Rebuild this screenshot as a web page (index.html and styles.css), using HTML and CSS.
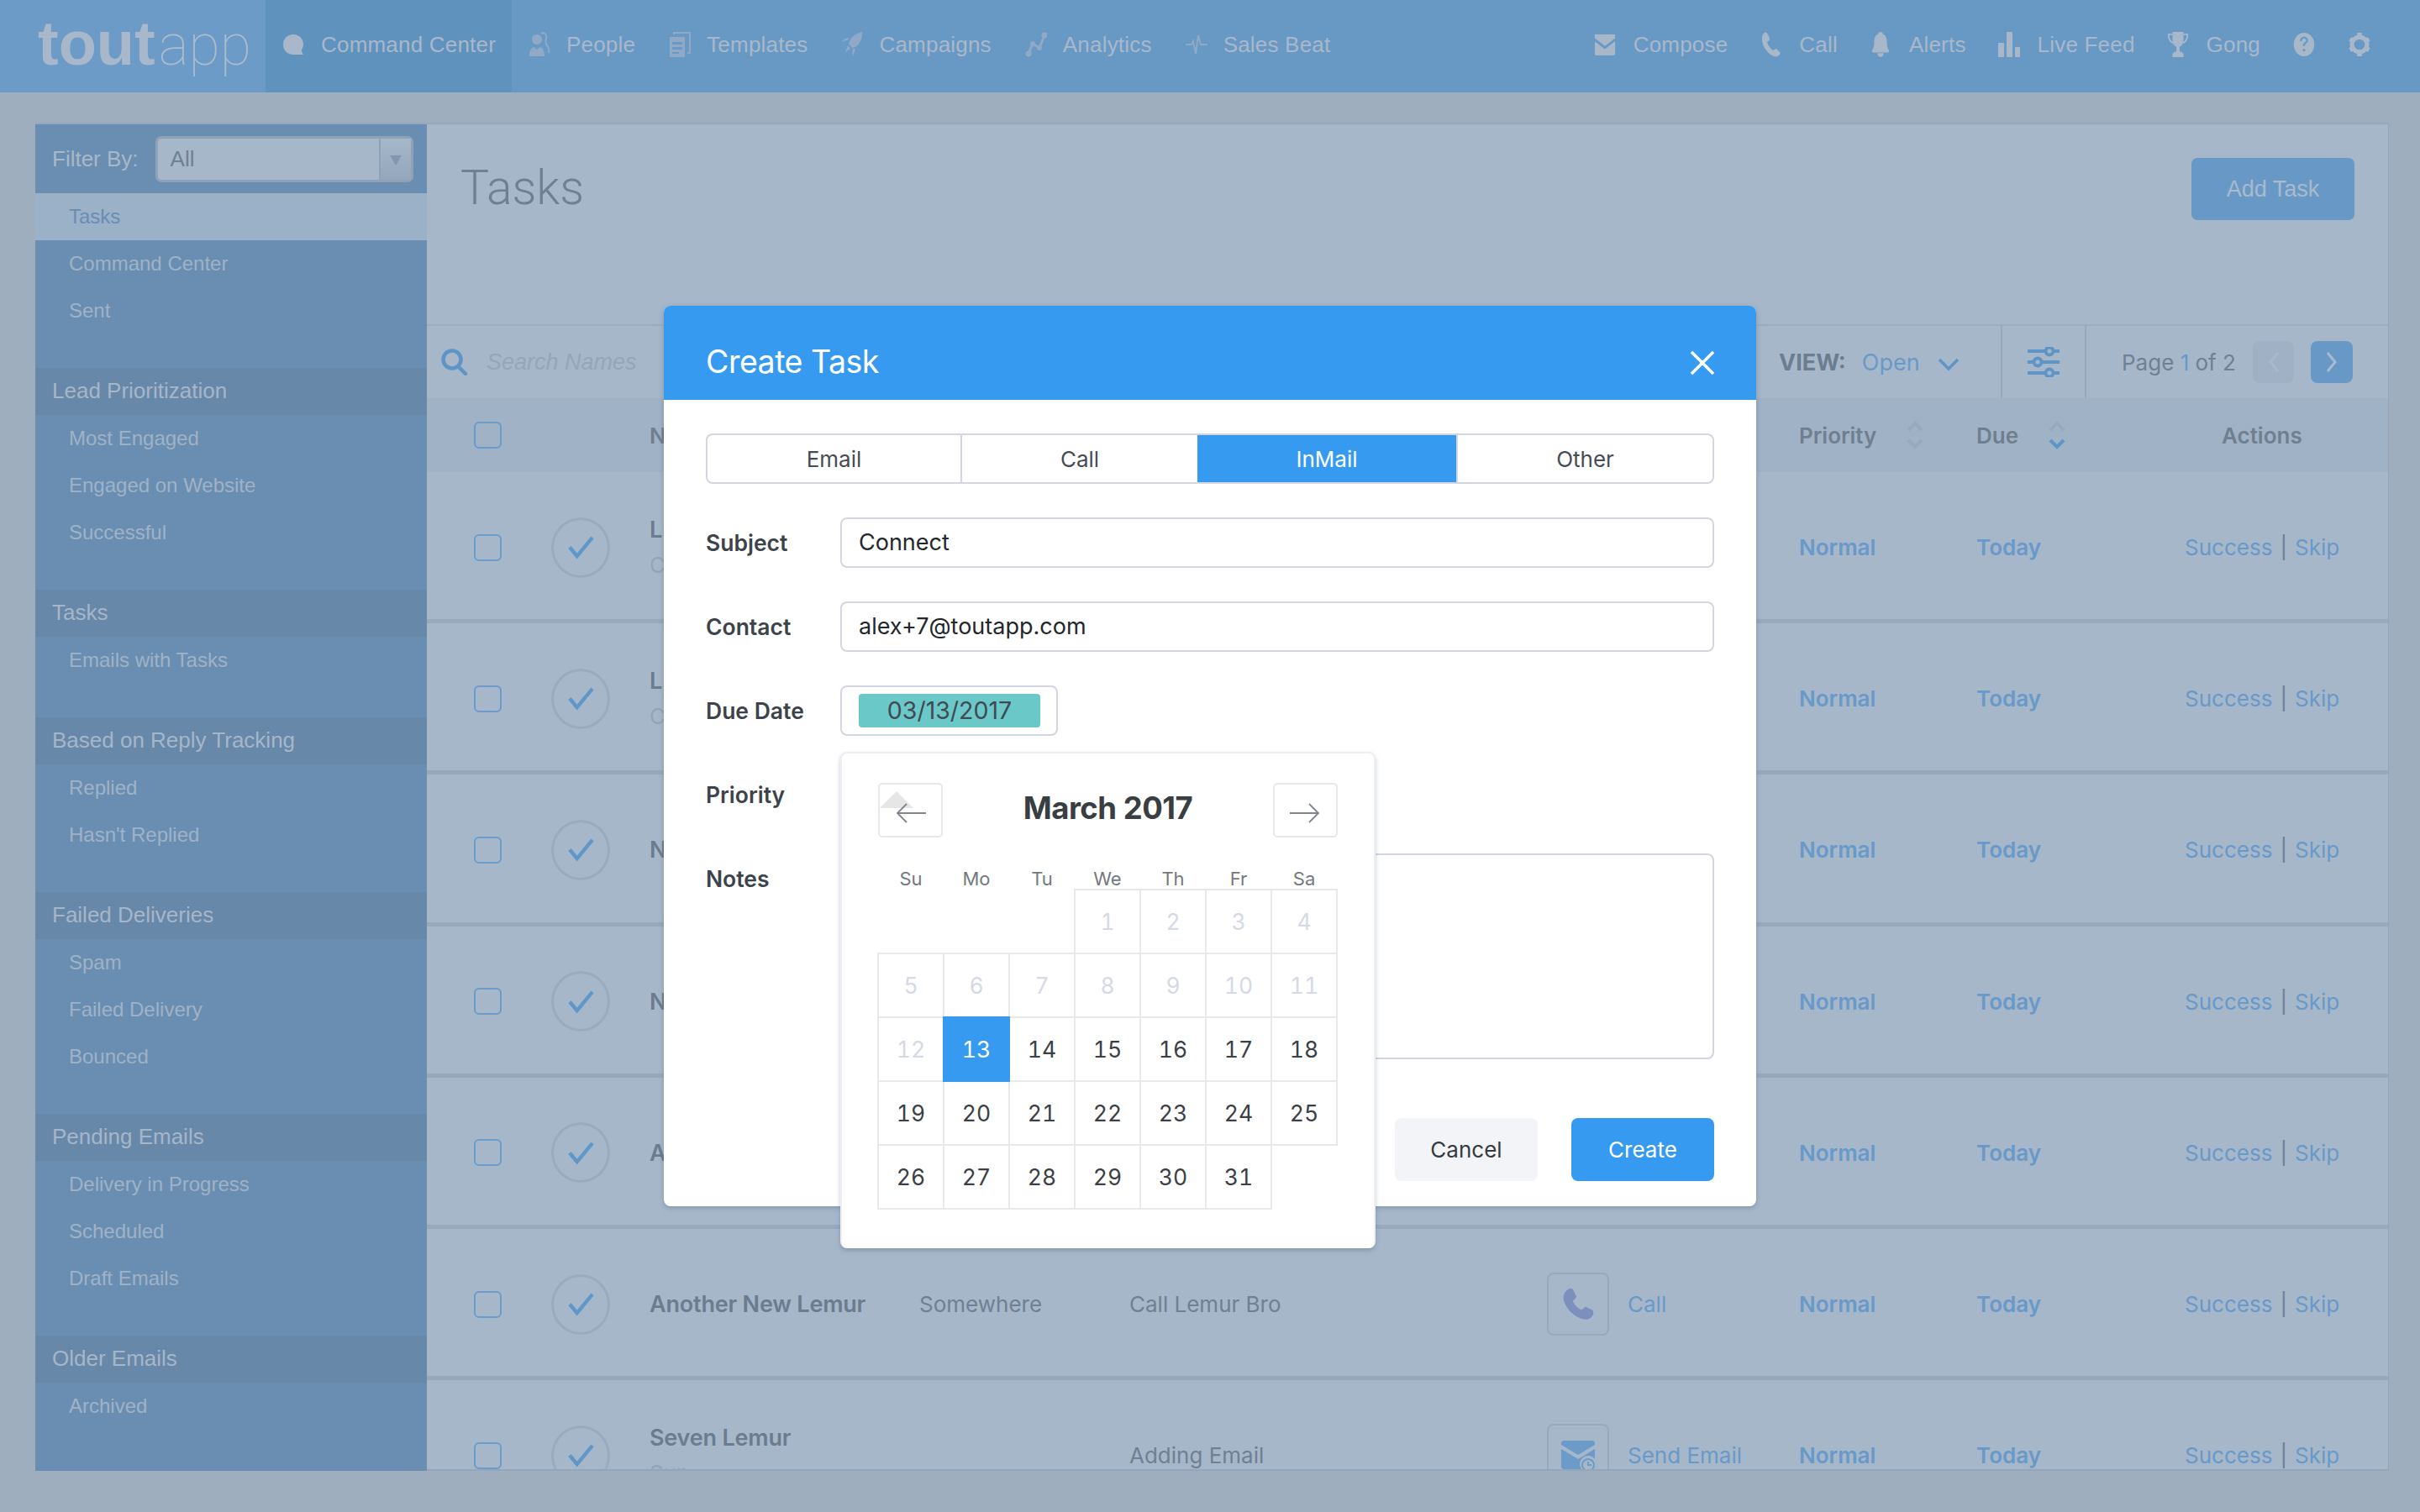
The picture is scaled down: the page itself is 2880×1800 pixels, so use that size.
FILE: index.html
```html
<!DOCTYPE html>
<html lang="en">
<head>
  <meta charset="UTF-8">
  <title>ToutApp - Tasks</title>
  <link rel="stylesheet" href="styles.css">
</head>
<body>
  <!-- Top navigation -->
  <header class="topbar">
    <div class="logo"><b>tout</b><span>app</span></div>
    <nav class="nav">
      <a class="nav-item active"><svg class="ico" viewBox="0 0 26 26"><path d="M13 1C6 1 1 6 1 13s5 12 12 12h12c-1.500-1.500-2-4-2-6 1.500-2 2-4 2-6 0-7-5-12-12-12z"/></svg>Command Center</a>
      <a class="nav-item"><svg class="ico dim" viewBox="0 0 26 30"><circle cx="10" cy="9" r="6"/><path d="M1 29c0-5 1-9 5-11l4 3 4-3c4 2 5 6 5 11z"/><path class="line" d="M15 2c4-2 7 1 6 6-1 4-1 6 1 8 2 2 3 5 2 9"/></svg>People</a>
      <a class="nav-item"><svg class="ico dim" viewBox="0 0 26 30"><path d="M1 6h18v24H1zM4 12v3h12v-3zM4 18v3h12v-3zM4 24v2h8v-2z" fill-rule="evenodd"/><path class="line" d="M6 3V1h14v0h5v24h-3"/></svg>Templates</a>
      <a class="nav-item"><svg class="ico dim" viewBox="0 0 26 30"><path d="M25 0c1 6-2 14-8 18l-4 1-4-5 2-5c3-5 9-8 14-9z"/><path d="M9 9l-8 3c2-3 5-5 8-5zM17 20l-3 9c-1-3-1-6 0-9zM8 16l3 4-6 4z"/></svg>Campaigns</a>
      <a class="nav-item"><svg class="ico dim" viewBox="0 0 26 30"><path class="line thick" d="M4 26l5-12 8 5 6-15"/><circle cx="4" cy="26" r="3.500"/><circle cx="9" cy="14" r="3"/><circle cx="17" cy="19" r="3"/><circle cx="23" cy="4" r="3.500"/></svg>Analytics</a>
      <a class="nav-item"><svg class="ico dim" viewBox="0 0 26 30"><path class="line" d="M0 15h7l2-4 3 15 3-22 3 11h8"/></svg>Sales Beat</a>
    </nav>
    <nav class="nav nav-right">
      <a class="nav-item"><svg class="ico wide" viewBox="0 0 28 30"><path d="M1 2h26v5L14 17 1 7zM1 11l13 10 13-10v17l-2 1H3l-2-1z"/></svg>Compose</a>
      <a class="nav-item"><svg class="ico" viewBox="0 0 24 30"><path d="M5 1c2-1 3 0 4 2l2 5c0 1 0 2-2 3l-1 1c1 4 4 8 7 10l2-1c1-1 2-1 3 0l3 3c1 1 1 2 0 3-2 2-4 3-7 2C8 26 1 15 2 7c0-3 1-5 3-6z"/></svg>Call</a>
      <a class="nav-item"><svg class="ico" viewBox="0 0 24 32"><path d="M12 0c2 0 3 1 3 3 4 1 5 5 5 10 0 5 1 8 3 11l-1 2H2l-1-2c2-3 3-6 3-11 0-5 1-9 5-10 0-2 1-3 3-3zM8 27h8c0 3-2 5-4 5s-4-2-4-5z"/></svg>Alerts</a>
      <a class="nav-item"><svg class="ico" viewBox="0 0 26 30"><rect x="0" y="13" width="7" height="17" rx="1"/><rect x="10" y="0" width="7" height="30" rx="1"/><rect x="20" y="18" width="6" height="12" rx="1"/></svg>Live Feed</a>
      <a class="nav-item"><svg class="ico" viewBox="0 0 26 32"><path d="M6 0h14v8c0 6-2 10-5 11v6h3v2h2v5H6v-5h2v-2h3v-6C8 18 6 14 6 8z"/><path class="line" d="M6 3H1c0 6 2 10 6 11M20 3h5c0 6-2 10-6 11"/></svg>Gong</a>
      <a class="nav-item icon-only"><svg class="ico" viewBox="0 0 26 32"><ellipse cx="13" cy="16" rx="13" ry="15"/><path class="hole" d="M9 12c0-3 2-5 4-5s4 2 4 4-3 3-4 5v2"/><circle class="dot" cx="13" cy="23" r="1.700"/></svg></a>
      <a class="nav-item icon-only"><svg class="ico" viewBox="0 0 26 32"><circle class="line gear" cx="13" cy="16" r="9.500"/><path class="line gear-teeth" d="M13 1v5M13 26v5M1 9l4 2.500M21 20.500l4 2.500M1 23l4-2.500M21 11.500L25 9"/></svg></a>
    </nav>
  </header>

  <div class="shell">
    <!-- Left filter list -->
    <aside class="sidebar">
      <div class="filter">
        <label>Filter By:</label>
        <div class="select"><span>All</span><i></i></div>
      </div>
      <ul class="side-group">
        <li class="active">Tasks</li>
        <li>Command Center</li>
        <li>Sent</li>
      </ul>
      <h4>Lead Prioritization</h4>
      <ul class="side-group">
        <li>Most Engaged</li>
        <li>Engaged on Website</li>
        <li>Successful</li>
      </ul>
      <h4>Tasks</h4>
      <ul class="side-group">
        <li>Emails with Tasks</li>
      </ul>
      <h4>Based on Reply Tracking</h4>
      <ul class="side-group">
        <li>Replied</li>
        <li>Hasn't Replied</li>
      </ul>
      <h4>Failed Deliveries</h4>
      <ul class="side-group">
        <li>Spam</li>
        <li>Failed Delivery</li>
        <li>Bounced</li>
      </ul>
      <h4>Pending Emails</h4>
      <ul class="side-group">
        <li>Delivery in Progress</li>
        <li>Scheduled</li>
        <li>Draft Emails</li>
      </ul>
      <h4>Older Emails</h4>
      <ul class="side-group">
        <li>Archived</li>
      </ul>
    </aside>

    <!-- Task table -->
    <main class="panel">
      <div class="panel-head">
        <h1>Tasks</h1>
        <button class="add-task">Add Task</button>
      </div>

      <div class="toolbar">
        <svg class="search-ico" viewBox="0 0 32 32"><circle cx="13" cy="13" r="10.500"/><path d="M21 22l8 8"/></svg>
        <span class="search-text">Search Names</span>
        <div class="view">
          <b>VIEW:</b><span>Open</span>
          <svg class="chev" viewBox="0 0 26 16"><path d="M2 2l11 11L24 2"/></svg>
        </div>
        <div class="tune">
          <svg viewBox="0 0 38 36"><path d="M1 5h36M1 18h36M1 31h36"/><circle cx="26" cy="5" r="4.500"/><circle cx="12" cy="18" r="4.500"/><circle cx="26" cy="31" r="4.500"/></svg>
        </div>
        <div class="pager">
          <span>Page <em>1</em> of 2</span>
          <button class="page-btn off"><svg viewBox="0 0 14 26"><path d="M12 2L3 13l9 11"/></svg></button>
          <button class="page-btn"><svg viewBox="0 0 14 26"><path d="M2 2l9 11-9 11"/></svg></button>
        </div>
      </div>

      <div class="task-row table-head">
        <span class="checkbox"></span>
        <span></span>
        <span>N</span>
        <span></span>
        <span></span>
        <span></span>
        <span class="sort">Priority
          <svg viewBox="0 0 20 34"><path d="M2 11l8-8 8 8M2 23l8 8 8-8"/></svg>
        </span>
        <span class="sort">Due
          <svg viewBox="0 0 20 34"><path d="M2 11l8-8 8 8"/><path class="on" d="M2 23l8 8 8-8"/></svg>
        </span>
        <span class="actions-head">Actions</span>
      </div>

      <!-- the middle cells of these rows sit behind the dialog -->
      <div class="task-row">
        <span class="checkbox"></span>
        <span class="done"><svg viewBox="0 0 34 30"><path d="M3 15l9 11L31 3"/></svg></span>
        <div class="who"><b>L</b><small>C</small></div>
        <span></span><span></span><span></span>
        <span class="link strong">Normal</span>
        <span class="link strong">Today</span>
        <span class="acts"><a>Success</a><i>|</i><a>Skip</a></span>
      </div>
      <div class="task-row">
        <span class="checkbox"></span>
        <span class="done"><svg viewBox="0 0 34 30"><path d="M3 15l9 11L31 3"/></svg></span>
        <div class="who"><b>L</b><small>C</small></div>
        <span></span><span></span><span></span>
        <span class="link strong">Normal</span>
        <span class="link strong">Today</span>
        <span class="acts"><a>Success</a><i>|</i><a>Skip</a></span>
      </div>
      <div class="task-row">
        <span class="checkbox"></span>
        <span class="done"><svg viewBox="0 0 34 30"><path d="M3 15l9 11L31 3"/></svg></span>
        <div class="who"><b>N</b></div>
        <span></span><span></span><span></span>
        <span class="link strong">Normal</span>
        <span class="link strong">Today</span>
        <span class="acts"><a>Success</a><i>|</i><a>Skip</a></span>
      </div>
      <div class="task-row">
        <span class="checkbox"></span>
        <span class="done"><svg viewBox="0 0 34 30"><path d="M3 15l9 11L31 3"/></svg></span>
        <div class="who"><b>N</b></div>
        <span></span><span></span><span></span>
        <span class="link strong">Normal</span>
        <span class="link strong">Today</span>
        <span class="acts"><a>Success</a><i>|</i><a>Skip</a></span>
      </div>
      <div class="task-row">
        <span class="checkbox"></span>
        <span class="done"><svg viewBox="0 0 34 30"><path d="M3 15l9 11L31 3"/></svg></span>
        <div class="who"><b>A</b></div>
        <span></span><span></span><span></span>
        <span class="link strong">Normal</span>
        <span class="link strong">Today</span>
        <span class="acts"><a>Success</a><i>|</i><a>Skip</a></span>
      </div>
      <div class="task-row">
        <span class="checkbox"></span>
        <span class="done"><svg viewBox="0 0 34 30"><path d="M3 15l9 11L31 3"/></svg></span>
        <div class="who"><b>Another New Lemur</b></div>
        <span class="place">Somewhere</span>
        <span class="title">Call Lemur Bro</span>
        <div class="kind">
          <span class="kind-box"><svg class="phone" viewBox="0 0 24 24"><path d="M6.600 1.500l2 .5 2.400 5-1 1.500-1.400 1.200c1 2.500 3.200 4.800 5.600 5.800l1.400-1.200 1.400-.8 4.700 2.300.3 2.200c-.8 2.500-3 4-5.500 3.700C9.600 20.600 3.400 14 2.500 8 2.300 5.300 4 2.800 6.600 1.500z"/></svg></span>
          Call
        </div>
        <span class="link strong">Normal</span>
        <span class="link strong">Today</span>
        <span class="acts"><a>Success</a><i>|</i><a>Skip</a></span>
      </div>
      <div class="task-row">
        <span class="checkbox"></span>
        <span class="done"><svg viewBox="0 0 34 30"><path d="M3 15l9 11L31 3"/></svg></span>
        <div class="who"><b>Seven Lemur</b><small>Sun</small></div>
        <span class="place"></span>
        <span class="title">Adding Email</span>
        <div class="kind">
          <span class="kind-box"><svg class="mail" viewBox="0 0 40 36"><path class="env" d="M0 2l2-2h36l2 2v3L20 17 0 5zM0 10l20 12 20-12v12a10 10 0 0 0-16 12H2l-2-2z"/><circle class="clock" cx="32" cy="29" r="7"/><path class="hands" d="M32 25v4h4"/></svg></span>
          Send Email
        </div>
        <span class="link strong">Normal</span>
        <span class="link strong">Today</span>
        <span class="acts"><a>Success</a><i>|</i><a>Skip</a></span>
      </div>
    </main>
  </div>

  <!-- Create Task dialog -->
  <section class="modal">
    <div class="modal-head">
      <h2>Create Task</h2>
      <button class="close"><svg viewBox="0 0 30 30"><path d="M2 2l26 26M28 2L2 28"/></svg></button>
    </div>
    <div class="modal-body">
      <div class="tabs">
        <span>Email</span>
        <span>Call</span>
        <span class="on">InMail</span>
        <span>Other</span>
      </div>
      <div class="field">
        <label>Subject</label>
        <div class="input">Connect</div>
      </div>
      <div class="field">
        <label>Contact</label>
        <div class="input">alex+7@toutapp.com</div>
      </div>
      <div class="field">
        <label>Due Date</label>
        <div class="date-wrap">
          <div class="input date-input"><span class="date-chip">03/13/2017</span></div>

          <!-- Date picker popup -->
          <div class="calendar">
            <div class="cal-head">
              <button class="cal-nav prev"><svg viewBox="0 0 36 24"><path d="M36 12H2M13 1L2 12l11 11"/></svg></button>
              <strong>March 2017</strong>
              <button class="cal-nav"><svg viewBox="0 0 36 24"><path d="M0 12h34M23 1l11 11-11 11"/></svg></button>
            </div>
            <div class="cal-days">
              <span>Su</span><span>Mo</span><span>Tu</span><span>We</span><span>Th</span><span>Fr</span><span>Sa</span>
            </div>
            <div class="cal-grid">
              <i></i><i></i><i></i>
              <a class="off">1</a><a class="off">2</a><a class="off">3</a><a class="off">4</a>
              <a class="off">5</a><a class="off">6</a><a class="off">7</a><a class="off">8</a><a class="off">9</a><a class="off">10</a><a class="off">11</a>
              <a class="off">12</a><a class="today">13</a><a>14</a><a>15</a><a>16</a><a>17</a><a>18</a>
              <a>19</a><a>20</a><a>21</a><a>22</a><a>23</a><a>24</a><a>25</a>
              <a>26</a><a>27</a><a>28</a><a>29</a><a>30</a><a>31</a>
            </div>
          </div>
        </div>
      </div>
      <div class="field">
        <label>Priority</label>
        <div class="input priority-input"></div>
      </div>
      <div class="field">
        <label>Notes</label>
        <div class="input notes"></div>
      </div>
      <div class="modal-foot">
        <button class="btn">Cancel</button>
        <button class="btn primary">Create</button>
      </div>
    </div>
  </section>
</body>
</html>
```

FILE: styles.css
```css
* {
  box-sizing: border-box;
}
html, body {
  margin: 0;
  height: 1800px;
  overflow: hidden;
}
body {
  position: relative;
  background: #9eaebf;
  font-family: "Liberation Sans", Arial, sans-serif;
  color: #6f8093;
}
a, button {
  font: inherit;
}
ul, h1, h2, h4 {
  margin: 0;
  padding: 0;
  list-style: none;
}

/* top bar */
.topbar {
  height: 110px;
  background: #6899c5;
  display: flex;
  color: #a8b8ca;
}
.logo {
  width: 316px;
  padding-left: 45px;
  display: flex;
  align-items: baseline;
  background: #6b9bc6;
  line-height: 104px;
}
.logo b {
  font-size: 74px;
}
.logo span {
  font-family: Roboto, sans-serif;
  font-weight: 100;
  font-size: 68px;
  margin-left: 4px;
  color: #adbccd;
}
.nav {
  display: flex;
}
.nav-right {
  margin-left: auto;
  padding-right: 39px;
}
.nav-item {
  display: flex;
  align-items: center;
  gap: 19px;
  padding: 0 20px 4px;
  font-size: 26px;
  letter-spacing: .2px;
  white-space: nowrap;
}
.nav-item.active {
  background: #6092be;
  gap: 20px;
  padding-right: 19px;
}
.nav-right .nav-item {
  padding: 0 19px 4px;
  gap: 21px;
}
.nav-right .icon-only {
  padding: 0 20px 4px;
}
.ico {
  width: 26px;
  height: 30px;
  fill: #a8b8ca;
  flex: none;
}
.ico.dim {
  fill: #8fa9c6;
}
.ico .line {
  fill: none;
  stroke: #a8b8ca;
  stroke-width: 2;
}
.ico.dim .line {
  stroke: #8fa9c6;
}
.ico .line.thick {
  stroke-width: 3;
}
.ico .hole {
  fill: none;
  stroke: #6899c5;
  stroke-width: 2.500;
}
.ico .dot {
  fill: #6899c5;
}
.ico .gear {
  stroke-width: 5.500;
}
.ico .gear-teeth {
  stroke-width: 6;
}

/* page shell */
.shell {
  margin: 36px 37px 0 42px;
  height: 1605px;
  display: flex;
  border-top: 2px solid #97a8bb;
}
.sidebar {
  width: 466px;
  flex: none;
  background: #6a8eb1;
  color: #9fb2c8;
  font-size: 24px;
  overflow: hidden;
}
.filter {
  height: 82px;
  display: flex;
  align-items: center;
  padding-left: 20px;
  gap: 20px;
  color: #a8b8ca;
  font-size: 26px;
}
.select {
  width: 307px;
  height: 55px;
  background: #a6b7ca;
  border: 3px solid #8ea1b7;
  border-radius: 7px;
  display: flex;
  align-items: center;
  justify-content: space-between;
  padding-left: 15px;
  color: #6f8093;
}
.select i {
  width: 38px;
  height: 100%;
  border-left: 2px solid #8ea1b7;
  background: linear-gradient(#a6b7ca, #93a6bb);
  position: relative;
}
.select i::after {
  content: "";
  position: absolute;
  left: 11px;
  top: 20px;
  border: 7px solid transparent;
  border-top: 12px solid #8296ad;
  border-bottom: 0;
}
.side-group {
  padding-bottom: 40px;
}
.side-group li {
  height: 56px;
  line-height: 56px;
  padding-left: 40px;
}
.side-group li.active {
  background: #9bb1c8;
  color: #688cb2;
}
.sidebar h4 {
  height: 56px;
  line-height: 54px;
  padding-left: 20px;
  background: #6788a9;
  font-weight: normal;
  font-size: 26px;
  color: #a6b6c9;
}

/* main panel */
.panel {
  flex: 1;
  background: #a6b7ca;
  border-right: 1px solid #94a6ba;
  border-bottom: 2px solid #94a6ba;
  overflow: hidden;
  font-family: Inter, "Liberation Sans", sans-serif;
}
.panel-head {
  height: 238px;
  padding: 40px 40px 0;
  display: flex;
  justify-content: space-between;
  align-items: flex-start;
}
.panel-head h1 {
  font-family: Roboto, sans-serif;
  font-weight: 300;
  font-size: 57px;
  line-height: 68px;
  padding-top: 2px;
  color: #6f8094;
}
.add-task {
  width: 194px;
  height: 74px;
  background: #6899c6;
  border: 0;
  border-radius: 7px;
  color: #a8bacc;
  font-family: "Liberation Sans", sans-serif;
  font-size: 27px;
}
.toolbar {
  height: 88px;
  border-top: 2px solid #9cadc1;
  display: flex;
  align-items: center;
  padding-left: 17px;
}
.search-ico {
  width: 32px;
  height: 32px;
  fill: none;
  stroke: #5f94c6;
  stroke-width: 4.500;
  stroke-linecap: round;
}
.search-text {
  margin-left: 22px;
  font-family: "Liberation Sans", sans-serif;
  font-style: italic;
  font-size: 27px;
  color: #93a6ba;
}
.view {
  margin-left: auto;
  width: 264px;
  display: flex;
  align-items: center;
  font-size: 27px;
  height: 100%;
}
.view b {
  font-weight: 700;
  color: #6c7d90;
  margin-right: 19px;
}
.view span {
  color: #6899c9;
  margin-right: 21px;
}
.chev {
  width: 26px;
  height: 16px;
  fill: none;
  stroke: #5f94c6;
  stroke-width: 3.500;
  margin-top: 6px;
}
.tune {
  width: 102px;
  height: 100%;
  flex: none;
  border-left: 2px solid #97a9bd;
  border-right: 2px solid #97a9bd;
  display: flex;
  align-items: center;
  justify-content: center;
}
.tune svg {
  width: 38px;
  height: 36px;
  fill: #a6b7ca;
  stroke: #5f94c6;
  stroke-width: 4;
  stroke-linecap: round;
}
.pager {
  width: 359px;
  padding: 0 42px;
  display: flex;
  align-items: center;
  font-size: 26px;
  color: #6f8093;
  white-space: nowrap;
}
.pager span {
  margin-right: auto;
}
.pager em {
  font-style: normal;
  color: #6899c9;
}
.page-btn {
  width: 50px;
  height: 50px;
  margin-left: 20px;
  padding: 0;
  border: 0;
  border-radius: 8px;
  background: #6899c6;
  display: flex;
  align-items: center;
  justify-content: center;
}
.page-btn svg {
  width: 14px;
  height: 26px;
  fill: none;
  stroke: #a8bacc;
  stroke-width: 3;
}
.page-btn.off {
  background: #a0b1c5;
}
.page-btn.off svg {
  stroke: #a8b9cb;
}

/* table rows */
.task-row {
  height: 180.200px;
  padding: 4px 0 0 56px;
  border-bottom: 5px solid #97a9bc;
  display: grid;
  grid-template-columns: 92px 117px 321px 250px 497px 300px 211px 248px 1fr;
  align-items: center;
  font-size: 26px;
}
.task-row:last-child {
  border-bottom-color: transparent;
}
.table-head {
  height: 88px;
  padding-top: 0;
  border-bottom: 0;
  background: #a0b2c5;
  font-weight: 600;
  color: #6f7f90;
}
.checkbox {
  width: 33px;
  height: 32px;
  border: 2px solid #6b9bcb;
  border-radius: 6px;
}
.done {
  width: 70px;
  height: 72px;
  border: 3px solid #9aabbf;
  border-radius: 50%;
  display: flex;
  align-items: center;
  justify-content: center;
}
.done svg {
  width: 33px;
  height: 29px;
  fill: none;
  stroke: #6097c9;
  stroke-width: 4.500;
}
.who {
  display: flex;
  flex-direction: column;
  gap: 11px;
}
.who b {
  font-weight: 600;
  line-height: 31px;
  color: #6b7c8f;
  font-size: 27px;
  white-space: nowrap;
  letter-spacing: -.2px;
}
.who small {
  font-size: 26px;
  line-height: 31px;
  color: #93a5b9;
}
.place, .title {
  color: #6f8093;
}
.kind {
  display: flex;
  align-items: center;
  gap: 22px;
  color: #6899c9;
}
.kind-box {
  width: 74px;
  height: 75px;
  border: 2px solid #97a9bd;
  border-radius: 8px;
  display: flex;
  align-items: center;
  justify-content: center;
  flex: none;
}
.phone {
  width: 44px;
  height: 44px;
  fill: #7d8fbc;
}
.mail {
  width: 40px;
  height: 36px;
}
.mail .env {
  fill: #6b9bc9;
}
.mail .clock {
  fill: #a6b7ca;
  stroke: #6b9bc9;
  stroke-width: 2;
}
.mail .hands {
  fill: none;
  stroke: #6b9bc9;
  stroke-width: 2;
}
.link {
  color: #6899c9;
}
.link.strong {
  font-weight: 600;
}
.acts {
  display: flex;
  align-items: center;
  color: #6899c9;
  white-space: nowrap;
}
.acts i {
  font-style: normal;
  color: #6f8093;
  margin: 0 9px;
}
.sort {
  display: flex;
  align-items: center;
  gap: 36px;
}
.sort svg {
  width: 20px;
  height: 34px;
  fill: none;
  stroke: #97a9bd;
  stroke-width: 4;
}
.sort svg .on {
  stroke: #5f94c6;
}
.actions-head {
  padding-left: 44px;
}

/* dialog */
.modal {
  position: absolute;
  left: 790px;
  top: 364px;
  width: 1300px;
  height: 1072px;
  background: #fff;
  border-radius: 8px;
  font-family: Inter, "Liberation Sans", sans-serif;
  box-shadow: 0 2px 6px rgba(80, 100, 125, .4);
}
.modal-head {
  height: 112px;
  background: #369bf0;
  border-radius: 8px 8px 0 0;
  padding: 0 49px 0 50px;
  display: flex;
  align-items: center;
  justify-content: space-between;
}
.modal-head h2 {
  font-weight: 400;
  font-size: 37.500px;
  color: #fff;
  letter-spacing: -.5px;
  padding-top: 20px;
}
.close {
  width: 30px;
  height: 30px;
  padding: 0;
  border: 0;
  background: none;
  margin-top: 24px;
}
.close svg {
  display: block;
  fill: none;
  stroke: #fff;
  stroke-width: 3.500;
}
.modal-body {
  padding: 40px 50px 30px;
  display: flex;
  flex-direction: column;
  gap: 40px;
}
.tabs {
  height: 60px;
  display: grid;
  grid-template-columns: 301px 282px 308px 1fr;
  border: 2px solid #d3d6e2;
  border-radius: 8px;
  overflow: hidden;
  font-size: 26px;
  color: #454c55;
}
.tabs span {
  display: flex;
  align-items: center;
  justify-content: center;
  border-left: 2px solid #d3d6e2;
}
.tabs span:first-child {
  border-left: 0;
}
.tabs .on {
  background: #369bf0;
  color: #fff;
  border-left: 0;
}
.field {
  display: grid;
  grid-template-columns: 160px 1fr;
}
.field label {
  height: 60px;
  line-height: 60px;
  font-weight: 600;
  font-size: 26.500px;
  color: #3c434a;
}
.input {
  height: 60px;
  border: 2px solid #d3d6e2;
  border-radius: 8px;
  padding-left: 20px;
  font-size: 27px;
  line-height: 56px;
  color: #23272b;
}
.date-wrap {
  position: relative;
}
.date-input {
  width: 259px;
  display: flex;
  align-items: center;
}
.date-chip {
  width: 216px;
  height: 40px;
  background: #6bc8c8;
  border-radius: 4px;
  text-align: center;
  line-height: 40px;
  font-size: 28.500px;
  color: #3f4a52;
}
.priority-input {
  width: 400px;
}
.notes {
  height: 245px;
}
.modal-foot {
  margin-top: 30px;
  display: flex;
  justify-content: flex-end;
  gap: 40px;
}
.btn {
  width: 170px;
  height: 75px;
  border: 0;
  border-radius: 8px;
  background: #f3f4f7;
  color: #343a40;
  font-size: 26px;
}
.btn.primary {
  background: #369bf0;
  color: #fff;
}

/* date picker */
.calendar {
  position: absolute;
  left: 0;
  top: 79px;
  width: 637px;
  height: 591px;
  z-index: 2;
  background: #fff;
  border: 2px solid #eeeff2;
  border-bottom: 0;
  border-radius: 8px;
  padding: 35px 43px 0;
  box-shadow: 0 3px 5px rgba(80, 100, 125, .35);
}
.cal-head {
  display: flex;
  justify-content: space-between;
  align-items: center;
}
.cal-head strong {
  font-size: 36.500px;
  font-weight: 700;
  color: #393e42;
  letter-spacing: -.5px;
  margin-bottom: 6px;
}
.cal-nav {
  width: 77px;
  height: 65px;
  padding: 0;
  background: #fff;
  border: 2px solid #e7e8ea;
  border-radius: 5px;
  display: flex;
  align-items: center;
  justify-content: center;
  position: relative;
}
.cal-nav svg {
  width: 36px;
  height: 24px;
  fill: none;
  stroke: #80868c;
  stroke-width: 1.800;
  margin-top: 6px;
  position: relative;
}
.prev::before {
  content: "";
  position: absolute;
  left: 0;
  top: 8px;
  border: 20px solid transparent;
  border-top: 0;
  border-bottom: 20px solid #e6e6e6;
}
.cal-days {
  margin-top: 36px;
  display: grid;
  grid-template-columns: repeat(7, 78px);
  font-size: 22px;
  line-height: 26px;
  text-align: center;
  color: #74797f;
}
.cal-grid {
  display: grid;
  grid-template-columns: repeat(7, 78px);
  grid-auto-rows: 76px;
}
.cal-grid a {
  margin: -1px;
  border: 2px solid #e7e8ea;
  display: flex;
  align-items: center;
  justify-content: center;
  font-size: 26.500px;
  font-variant-numeric: tabular-nums;
  font-feature-settings: "tnum";
  color: #3a4046;
}
.cal-grid a.off {
  color: #d5d9e5;
}
.cal-grid a.today {
  background: #369bf0;
  border-color: #369bf0;
  color: #fff;
  position: relative;
}
```
